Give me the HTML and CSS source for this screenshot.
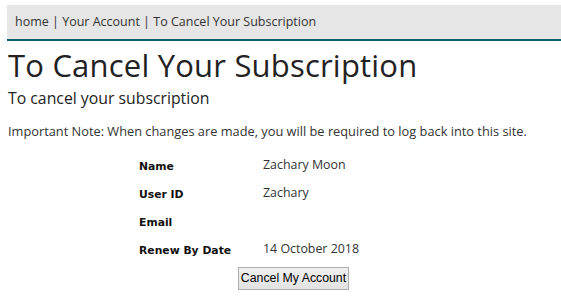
FILE: index.html
```html
<!DOCTYPE html>
<html lang="en">
  <head>
    <meta charset="UTF-8" />
    <title>To Cancel Your Subscription</title>
    <link rel="stylesheet" href="styles.css">
  </head>
  <body>
    <div class="crumbs">
      <a href="#">home</a> | <a href="#">Your Account</a> | <span>To Cancel Your Subscription</span>
    </div>
    <div class="page">
      <h1 class="title">To Cancel Your Subscription</h1>
      <h2 class="subtitle">To cancel your subscription</h2>
      <p class="note">Important Note: When changes are made, you will be required to log back into this site.</p>
      <div class="details">
        <div class="label">Name</div>
        <div class="value">Zachary Moon</div>
        <div class="label">User ID</div>
        <div class="value">Zachary</div>
        <div class="label">Email</div>
        <div class="value"></div>
        <div class="label">Renew By Date</div>
        <div class="value">14 October 2018</div>
      </div>
      <div class="actions">
        <button class="cancel-btn">Cancel My Account</button>
      </div>
    </div>
  </body>
</html>
```

FILE: styles.css
```css
body {
  margin: 0;
  padding: 5px 0 0 7px;
  font-family: "Open Sans", "Noto Sans", Arial, sans-serif;
  color: #333;
  background: #fff;
}
.crumbs {
  background: #e6e6e6;
  border-bottom: 2px solid #0b5d6b;
  height: 34px;
  line-height: 34px;
  padding-left: 8px;
  font-size: 12.5px;
  color: #333;
}
.crumbs a {
  color: #333;
  text-decoration: none;
}
.page {
  padding-left: 1px;
}
.title {
  margin: 4px 0 0 0;
  font-size: 31px;
  font-weight: 400;
  line-height: 40px;
  color: #222;
  letter-spacing: 0.2px;
}
.subtitle {
  margin: 2px 0 0 0;
  font-size: 15.8px;
  font-weight: 400;
  line-height: 22px;
  color: #222;
}
.note {
  margin: 13px 0 0 0;
  font-size: 12.8px;
  line-height: 18px;
  color: #333;
}
.details {
  display: grid;
  grid-template-columns: 124px 120px;
  grid-auto-rows: 28px;
  margin: 13px 0 0 131px;
}
.label {
  font-family: "DejaVu Sans", Verdana, sans-serif;
  font-weight: bold;
  font-size: 10.8px;
  line-height: 28px;
  color: #111;
}
.value {
  font-size: 12.4px;
  line-height: 24px;
  color: #333;
}
.actions {
  padding: 0 0 0 230px;
}
.cancel-btn {
  font-family: "Liberation Sans", Arial, sans-serif;
  font-size: 12.3px;
  color: #000;
  white-space: nowrap;
  width: 111px;
  height: 23px;
  padding: 0;
  background: linear-gradient(#f0f0f0, #e2e2e2);
  border: 1px solid #adadad;
  border-radius: 0;
}
```
